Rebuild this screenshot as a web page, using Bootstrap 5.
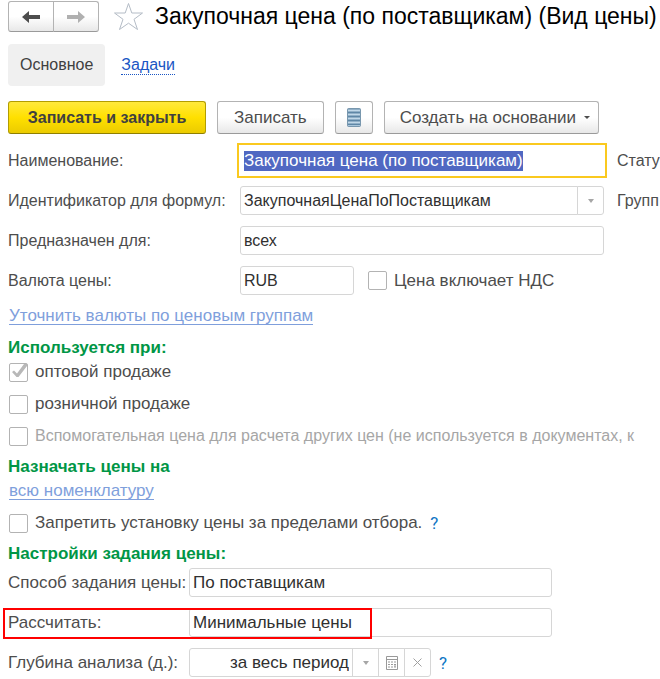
<!DOCTYPE html>
<html lang="ru">
<head>
<meta charset="utf-8">
<meta name="viewport" content="width=device-width, initial-scale=1">
<title>Закупочная цена (по поставщикам) (Вид цены)</title>
<link href="https://cdn.jsdelivr.net/npm/bootstrap@5.3.0/dist/css/bootstrap.min.css" rel="stylesheet">
<style>
body { font: 16px/22px "Liberation Sans", Arial, sans-serif; color: #4d4d4d; background: #fff; overflow-x: hidden; }
.page { padding: 1px 0 2px 8px; }
.page-title { font-size: 23px; line-height: 31px; color: #000; }
.history { height: 31px; }
.history .btn { width: 46px; }
.star-btn { width: 30px; height: 31px; margin: 0 11px 0 15px; }
.btn-soft { --bs-btn-padding-y: 0; --bs-btn-padding-x: 0; --bs-btn-border-radius: 3px; --bs-btn-font-size: 17px; --bs-btn-color: #4d4d4d; --bs-btn-border-color: #b3b3b3; --bs-btn-hover-border-color: #999; --bs-btn-line-height: 22px; background: linear-gradient(#fff 50%, #e8e8e8); border-bottom-color: #9a9a9a; }
.btn-main { --bs-btn-font-size: 16px; --bs-btn-color: #404040; --bs-btn-border-color: #b29d00; min-width: 198px; background: linear-gradient(#ffe93c, #ffe000 50%, #ebcb00); border-bottom-color: #8f7f00; }
.list-btn { width: 38px; }
.make-btn { padding: 0 8px 0 15px; }
.tabs { margin-top: 12px; --bs-nav-link-padding-y: 10px; --bs-nav-link-padding-x: 12px; --bs-nav-pills-border-radius: 4px; --bs-nav-pills-link-active-bg: #f0f0f0; --bs-nav-pills-link-active-color: #404040; --bs-nav-link-color: #1a56c4; }
.tabs .dotted { border-bottom: 1px dotted #1a56c4; line-height: 18px; }
.commands { margin-top: 15px; gap: 11px; }
.commands .btn { height: 33px; }
.form-rows { display: grid; gap: 11px; }
.form-upper { margin: 12px 0 9px; }
.form-lower { margin: 2px 108px 0 0; font-size: 17px; }
.form-upper .field-label { width: 232px; }
.form-lower .field-label { width: 181px; }
.field-label, .side-label { flex: none; white-space: nowrap; }
.side-label { width: 43px; margin-left: 13px; }
.field { height: 29px; padding: 0 3px; font-size: 16px; line-height: 19px; color: #303030; border-color: #d6d6d6; border-radius: 3px; min-width: 0; }
.field-name, .form-lower .field { font-size: 17px; }
.field:focus { box-shadow: none; color: #303030; border-color: #fff; outline: 2px solid #fac91f; outline-offset: 1px; border-radius: 0; }
.field::selection { color: #fff; background: #5068c2; }
.field-btn { width: 27px; height: 29px; padding: 0; border-color: #d6d6d6; border-radius: 3px; background: #fff; line-height: 1; }
.depth { width: 242px; }
.currency { width: 114px; flex: none; margin-right: 13px; }
.link-row { display: flex; align-items: center; height: 24px; }
.soft-link { font-size: 17px; line-height: 17px; color: #7f9fdc; text-decoration: none; border-bottom: 1px solid #7f9fdc; margin-left: 1px; }
.section { font-size: 17px; line-height: 24px; font-weight: 700; color: #009646; margin: 8px 0 0; }
.tick { display: flex; align-items: center; height: 22px; min-height: 0; margin: 0; padding: 0; font-size: 17px; white-space: nowrap; overflow: hidden; }
.tick .form-check-input { flex: none; width: 19px; height: 19px; margin: 0 7px 0 1px; float: none; border: 1px solid #b3b3b3; border-radius: 2px; opacity: 1; }
.tick .form-check-input:checked { background: #fff url("data:image/svg+xml,%3Csvg xmlns='http://www.w3.org/2000/svg' viewBox='0 0 17 17'%3E%3Cpath d='M2 8l2-1.500 3 3L14 0h3v2L8.500 13H6.500z' fill='%23b8b8b8'/%3E%3C/svg%3E") center/100% no-repeat; }
.ticks { display: grid; gap: 10px; grid-template-columns: minmax(0, 1fr); margin: 1px 0 0; }
.tick.limit { margin: 9px 0 0; }
.tick.muted { font-size: 16px; color: #a6a6a6; }
.help { font-family: Roboto, "Liberation Sans", sans-serif; font-size: 17px; color: #0e76c4; text-decoration: none; margin-left: 8px; }
.highlight { position: absolute; left: -5px; top: 0; width: 369px; height: 31px; border: 2px solid #f00; pointer-events: none; z-index: 6; }
svg { display: block; }
</style>
</head>
<body>
<main class="page">
  <header class="d-flex align-items-start">
    <div class="btn-group history" role="group" aria-label="История">
      <button type="button" class="btn btn-soft d-flex align-items-center justify-content-center" aria-label="Назад"><svg width="18" height="14" viewBox="0 0 18 14"><path d="M0 7l7-6v4h11v4H7v4z" fill="#4d4d4d"/></svg></button>
      <button type="button" class="btn btn-soft d-flex align-items-center justify-content-center" aria-label="Вперёд"><svg width="18" height="14" viewBox="0 0 18 14"><path d="M18 7l-7-6v4H0v4h11v4z" fill="#b0b0b0"/></svg></button>
    </div>
    <button type="button" class="btn p-0 border-0 star-btn" aria-label="В избранное"><svg width="30" height="31" viewBox="0 0 30 31"><path d="M14.500 2.500L17.800 12H28.500L20 18.300L23.500 28.500L14.500 22.200L5.500 28.500L9 18.300L.5 12H11.200Z" fill="#fff" stroke="#b4bcc6"/></svg></button>
    <h1 class="page-title text-nowrap mb-0">Закупочная цена (по поставщикам) (Вид цены)</h1>
  </header>

  <nav class="nav nav-pills tabs" aria-label="Разделы">
    <a class="nav-link active" href="#main" aria-current="page">Основное</a>
    <a class="nav-link ms-1" href="#tasks"><span class="dotted d-inline-block">Задачи</span></a>
  </nav>

  <div class="commands d-flex">
    <button type="button" class="btn btn-soft btn-main fw-bold px-3">Записать и закрыть</button>
    <button type="button" class="btn btn-soft px-3">Записать</button>
    <button type="button" class="btn btn-soft list-btn" aria-label="Список"><svg class="mx-auto" width="14" height="19" viewBox="0 0 14 19"><rect x=".5" y=".5" width="13" height="18" rx="1" fill="#5f87a6" stroke="#7897ae"/><path d="M1 2.500h12M1 6.500h12M1 10.500h12M1 14.500h12" stroke="#c1d8e8" stroke-width="2"/><path d="M1 17.500h12" stroke="#a8c5da"/></svg></button>
    <button type="button" class="btn btn-soft d-flex align-items-center text-nowrap make-btn">Создать на основании <svg class="ms-2" width="6" height="4" viewBox="0 0 6 4"><path d="M0 0h6L3 3z" fill="#4d4d4d"/></svg></button>
  </div>

  <form id="price">
    <div class="form-rows form-upper">
      <div class="d-flex align-items-center">
        <label class="field-label" for="name">Наименование:</label>
        <input class="form-control field field-name" id="name" value="Закупочная цена (по поставщикам)" autocomplete="off" spellcheck="false">
        <span class="side-label">Стату</span>
      </div>
      <div class="d-flex align-items-center">
        <label class="field-label" for="ident">Идентификатор для формул:</label>
        <div class="input-group flex-nowrap">
          <input class="form-control field" id="ident" value="ЗакупочнаяЦенаПоПоставщикам" spellcheck="false">
          <button type="button" class="btn field-btn" aria-label="Выбрать"><svg class="mx-auto" width="6" height="4" viewBox="0 0 6 4"><path d="M0 0h6L3 4z" fill="#a6a6a6"/></svg></button>
        </div>
        <span class="side-label">Групп</span>
      </div>
      <div class="d-flex align-items-center">
        <label class="field-label" for="target">Предназначен для:</label>
        <input class="form-control field" id="target" value="всех" spellcheck="false">
        <span class="side-label"></span>
      </div>
      <div class="d-flex align-items-center">
        <label class="field-label" for="currency">Валюта цены:</label>
        <input class="form-control field currency" id="currency" value="RUB" spellcheck="false">
        <div class="form-check tick"><input class="form-check-input" type="checkbox" id="vat"><label class="form-check-label" for="vat">Цена включает НДС</label></div>
      </div>
    </div>
    <div class="link-row"><a class="soft-link" href="#groups">Уточнить валюты по ценовым группам</a></div>

    <h2 class="section">Используется при:</h2>
    <div class="ticks">
      <div class="form-check tick"><input class="form-check-input" type="checkbox" id="whole" checked><label class="form-check-label" for="whole">оптовой продаже</label></div>
      <div class="form-check tick"><input class="form-check-input" type="checkbox" id="retail"><label class="form-check-label" for="retail">розничной продаже</label></div>
      <div class="form-check tick muted"><input class="form-check-input" type="checkbox" id="aux"><label class="form-check-label" for="aux">Вспомогательная цена для расчета других цен (не используется в документах, к</label></div>
    </div>

    <h2 class="section">Назначать цены на</h2>
    <div class="link-row"><a class="soft-link" href="#items">всю номенклатуру</a></div>
    <div class="form-check tick limit"><input class="form-check-input" type="checkbox" id="limit"><label class="form-check-label" for="limit">Запретить установку цены за пределами отбора.</label><a class="help" href="#help-limit">?</a></div>

    <h2 class="section">Настройки задания цены:</h2>
    <div class="form-rows form-lower">
      <div class="d-flex align-items-center">
        <label class="field-label" for="method">Способ задания цены:</label>
        <input class="form-control field" id="method" value="По поставщикам" spellcheck="false">
      </div>
      <div class="d-flex align-items-center position-relative">
        <label class="field-label" for="calc">Рассчитать:</label>
        <input class="form-control field" id="calc" value="Минимальные цены" spellcheck="false">
        <span class="highlight"></span>
      </div>
      <div class="d-flex align-items-center">
        <label class="field-label" for="depth">Глубина анализа (д.):</label>
        <div class="input-group flex-nowrap depth">
          <input class="form-control field text-end" id="depth" value="за весь период" spellcheck="false">
          <button type="button" class="btn field-btn" aria-label="Выбрать"><svg class="mx-auto" width="6" height="4" viewBox="0 0 6 4"><path d="M0 0h6L3 4z" fill="#a6a6a6"/></svg></button>
          <button type="button" class="btn field-btn" aria-label="Калькулятор"><svg class="mx-auto" width="12" height="14" viewBox="0 0 12 14"><path d="M.5.5h11v13H.5zM.5 3.500h11" fill="none" stroke="#999"/><path d="M2 6h2M5 6h2M8 6h2M2 8.500h2M5 8.500h2M2 11h2M5 11h2M8 8.500h2M8 10h2M8 11h2" stroke="#999"/></svg></button>
          <button type="button" class="btn field-btn" aria-label="Очистить"><svg class="mx-auto" width="9" height="9" viewBox="0 0 9 9"><path d="M.5.5l8 8M8.500.5l-8 8" stroke="#a0a0a0"/></svg></button>
        </div>
        <a class="help" href="#help-depth">?</a>
      </div>
    </div>
  </form>
</main>
<script src="https://cdn.jsdelivr.net/npm/bootstrap@5.3.0/dist/js/bootstrap.bundle.min.js"></script>
<script>
document.getElementById('name').focus();
document.getElementById('name').select();
</script>
</body>
</html>
